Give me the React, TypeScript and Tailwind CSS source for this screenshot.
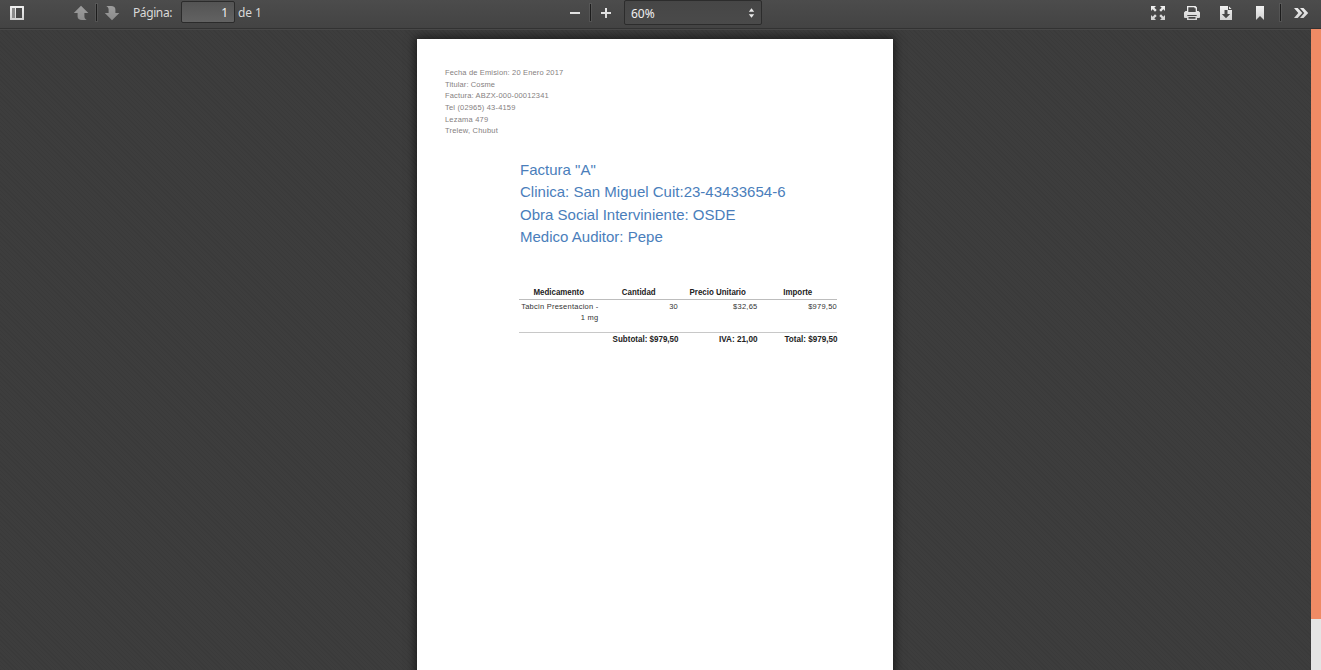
import type { ReactNode } from "react";

const infoLines = [
  { text: "Fecha de Emision: 20 Enero 2017", spacing: "tracking-[0.16px]" },
  { text: "Titular: Cosme", spacing: "tracking-[0.12px]" },
  { text: "Factura: ABZX-000-00012341", spacing: "tracking-[0.16px]" },
  { text: "Tel (02965) 43-4159", spacing: "tracking-[0.18px]" },
  { text: "Lezama 479", spacing: "tracking-[0.2px]" },
  { text: "Trelew, Chubut", spacing: "tracking-[0.2px]" },
];

const headingLines = [
  'Factura "A"',
  "Clinica: San Miguel Cuit:23-43433654-6",
  "Obra Social Interviniente: OSDE",
  "Medico Auditor: Pepe",
];

function Icon({ children, className = "" }: { children: ReactNode; className?: string }) {
  return (
    <svg viewBox="0 0 16 16" width="16" height="16" className={`shrink-0 ${className}`} fill="url(#iconFill)">
      {children}
    </svg>
  );
}

function Separator({ className = "" }: { className?: string }) {
  return <div className={`h-[17px] w-px shrink-0 bg-[#1c1c1c] shadow-[0_0_0_1px_rgba(255,255,255,0.07)] ${className}`} />;
}

function Toolbar() {
  return (
    <header className="relative flex h-[29px] shrink-0 items-start border-b border-[#323232] bg-linear-to-b from-[#4c4c4c] to-[#434343] font-['Noto_Sans',sans-serif] text-xs leading-4 text-[#d9d9d9] shadow-[0_1px_0_#484848]">
      <svg width="0" height="0" className="h-0 w-0">
        <defs>
          <linearGradient id="iconFill" gradientUnits="userSpaceOnUse" x1="0" y1="0" x2="0" y2="16">
            <stop offset="0" stopColor="#f4f4f4" />
            <stop offset="1" stopColor="#cecece" />
          </linearGradient>
          <linearGradient id="dimFill" gradientUnits="userSpaceOnUse" x1="0" y1="0" x2="0" y2="16">
            <stop offset="0" stopColor="#9e9e9e" />
            <stop offset="1" stopColor="#8b8b8b" />
          </linearGradient>
        </defs>
      </svg>
      <div className="flex w-[567px] items-start">
        <Icon className="mt-[5px] ml-[9px]">
          <path fillRule="evenodd" d="M1.5 1h13a.5.5 0 0 1 .5.5v13a.5.5 0 0 1-.5.5h-13a.5.5 0 0 1-.5-.5v-13a.5.5 0 0 1 .5-.5zM3 3v10h3V3zM7 3v10h6V3z" />
          <path d="M3 3h3v10H3z" fill="#8b8b8b" />
        </Icon>
        <Icon className="mt-[5px] ml-[48px]">
          <path fill="url(#dimFill)" d="M8 .7 15.300 8h-3.900v3.500c0 1.500.8 2.700 2.300 3.500H9C6 15 4.600 13.700 4.600 11.500V8H.8z" />
        </Icon>
        <Separator className="mt-1 ml-[7px]" />
        <Icon className="mt-[5px] ml-[7px]">
          <path fill="url(#dimFill)" d="M8 15.300 15.300 8h-3.900V4.500C11.400 2.300 10 1 7 1H2.300c1.500.8 2.300 2 2.300 3.500V8H.8z" />
        </Icon>
        <span className="mt-[5px] ml-[13px] w-12 tracking-[-0.4px] whitespace-nowrap">Página:</span>
        <div className="mt-px h-[22px] w-[54px] rounded-[2px] border border-[#2b2b2b] bg-linear-to-b from-[#545454] to-[#626262] pt-[3px] pr-[6px] text-right text-[#f0f0f0]">1</div>
        <span className="mt-[5px] ml-[3px] tracking-[-0.1px] whitespace-nowrap">de 1</span>
      </div>
      <Icon className="mt-[5px]"><path d="M3 7h10v2H3z" /></Icon>
      <Separator className="mt-1 ml-[7px]" />
      <Icon className="mt-[5px] ml-[7px]"><path d="M7 3h2v4h4v2H9v4H7V9H3V7h4z" /></Icon>
      <div className="ml-[10px] flex h-[25px] w-[138px] justify-between rounded-[2px] border border-[#2c2c2c] bg-linear-to-b from-[#464646] to-[#4a4a4a] pt-[5px] pr-[6px] pl-[6px] text-[#f0f0f0]">
        <span>60%</span>
        <svg width="7" height="10" viewBox="0 0 7 10" className="mt-[2px]" fill="#e8e8e8">
          <path d="M3.500.3 6.200 3.800H.8zM3.500 9.700.8 6.200h5.400z" />
        </svg>
      </div>
      <div className="ml-auto flex items-start pr-3">
        <Icon className="mt-[5px]">
          <path d="M1 1h5L4.300 2.700 6.700 5 5 6.700 2.700 4.300 1 6zM15 1v5l-1.700-1.700L11 6.700 9.300 5l2.400-2.300L10 1zM1 15v-5l1.700 1.700L5 9.300 6.700 11l-2.400 2.300L6 15zM15 15h-5l1.700-1.700L9.300 11 11 9.300l2.300 2.400L15 10z" />
        </Icon>
        <Icon className="mt-[5px] ml-[18px]">
          <path fillRule="evenodd" d="M3 1h8.500L13 2.500V6h1.500L16 7.500v5l-1 .5h-2v2H3v-2H1l-1-.5v-5L1.500 6H3zM4.300 2.300V7h7.400V3.300h-1.200v-1zM3.300 10v1h9.400v-1zM4.500 12v1.700h7V12z" />
        </Icon>
        <Icon className="mt-[5px] ml-[18px]">
          <path fillRule="evenodd" d="M2 1h8v4h4v10H2zM6.500 5v4H3.800L8 13.300 12.200 9H9.500V5z" />
          <path d="M11 1.500 13.500 4H11z" />
        </Icon>
        <Icon className="mt-[5px] ml-[18px]"><path d="M4 1h8v14l-4-4-4 4z" /></Icon>
        <Separator className="mt-1 ml-3" />
        <Icon className="mt-[5px] ml-[12px]">
          <path d="M1 3h3.700l4.600 5-4.600 5H1l4.300-5zM7 3h3.500l4.700 5-4.700 5H7l4.300-5z" />
        </Icon>
      </div>
    </header>
  );
}

function InvoiceTable() {
  return (
    <div className="mt-[37.8px] ml-[102px] w-[318px] text-[9px] leading-[11px] text-[#222222]">
      <div className="grid h-[14px] grid-cols-4 border-b border-[#bdbdbd] pt-px text-center font-bold">
        <span className="scale-x-[0.88]">Medicamento</span>
        <span className="scale-x-[0.88]">Cantidad</span>
        <span className="scale-x-[0.88]">Precio Unitario</span>
        <span className="scale-x-[0.88]">Importe</span>
      </div>
      <div className="grid h-[33px] grid-cols-4 border-b border-[#c8c8c8] pt-px text-right text-[7.5px] tracking-[0.25px] whitespace-nowrap text-[#333333]">
        <span>Tabcin Presentacion -<br />1 mg</span>
        <span>30</span>
        <span>$32,65</span>
        <span>$979,50</span>
      </div>
      <div className="grid grid-cols-4 pt-px text-right font-bold whitespace-nowrap">
        <span />
        <span className="origin-right scale-x-[0.89]">Subtotal: $979,50</span>
        <span className="origin-right scale-x-[0.91]">IVA: 21,00</span>
        <span className="origin-right scale-x-[0.9]">Total: $979,50</span>
      </div>
    </div>
  );
}

export default function App() {
  return (
    <div className="flex h-[670px] w-[1321px] flex-col overflow-hidden bg-[#3c3c3c]">
      <Toolbar />
      <div className="flex min-h-0 flex-1">
        <main className="flex min-w-0 flex-1 justify-center overflow-hidden bg-[#3d3d3d] bg-[repeating-linear-gradient(45deg,rgba(0,0,0,0.05)_0_1px,transparent_1px_3px)] pt-[10px] pr-px">
          <article className="h-[674px] w-[476px] shrink-0 bg-white pt-[28px] font-['Liberation_Sans',sans-serif] shadow-[0_0_9px_2px_rgba(0,0,0,0.55)]">
            <div className="ml-[28px] text-[7.5px] leading-[11.65px] text-[#858080]">
              {infoLines.map((line) => (
                <p key={line.text}><span className={line.spacing}>{line.text}</span></p>
              ))}
            </div>
            <div className="mt-[22px] ml-[103px] text-[15px] leading-[22.4px] tracking-[0.01px] text-[#4a7ebb]">
              {headingLines.map((line) => (
                <p key={line}><span>{line}</span></p>
              ))}
            </div>
            <InvoiceTable />
          </article>
        </main>
        <div className="relative z-10 w-[10px] shrink-0 bg-[#e5e5e5]">
          <div className="h-[590px] bg-[#f08b65]" />
        </div>
      </div>
    </div>
  );
}
